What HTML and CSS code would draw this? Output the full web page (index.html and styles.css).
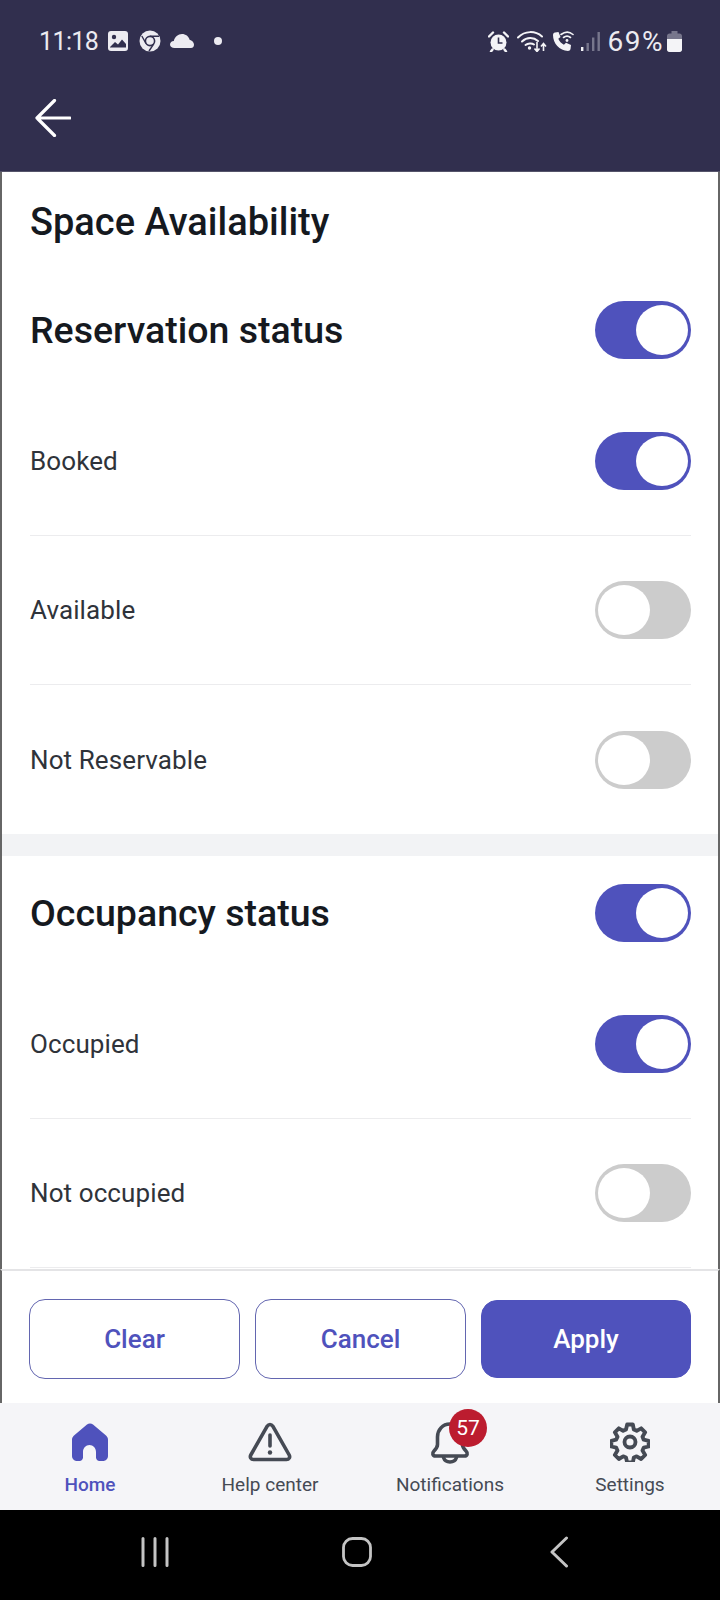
FILE: index.html
```html
<!DOCTYPE html>
<html lang="en">
<head>
    <meta charset="UTF-8">
    <meta name="viewport" content="width=device-width, initial-scale=1.0">
    <title>Space Availability</title>
    <link rel="stylesheet" href="styles.css">
</head>
<body>
    <div class="header">
        <div class="status-bar">
            <span class="clock">11:18</span>
            <svg class="st-icon" width="20" height="20" viewBox="0 0 20 20">
                <rect width="20" height="20" rx="3" fill="#ecebf1"/>
                <circle cx="6" cy="6" r="2.2" fill="#312f4e"/>
                <path d="M2 16l5-5 3 2.500 4-5 4 4.500v3.500H2z" fill="#312f4e"/>
            </svg>
            <svg class="st-icon chrome" width="22" height="22" viewBox="0 0 22 22">
                <circle cx="11" cy="11" r="10.500" fill="#ecebf1"/>
                <circle cx="11" cy="11" r="4.600" fill="none" stroke="#312f4e" stroke-width="1.600"/>
                <path d="M11 6.200h9M7 13.500L2.800 6M14.800 13.800L10 21" stroke="#312f4e" stroke-width="1.400" fill="none"/>
            </svg>
            <svg class="st-icon cloud" width="24" height="14" viewBox="0 0 24 14">
                <path d="M4.500 14C2 14 0 12.400 0 10.400 0 8.500 1.700 7 3.800 6.900 4.700 3 8 0 12 0c3.700 0 6.800 2.400 7.600 5.800C22 6.300 24 8.300 24 10.600 24 12.600 23 14 21 14z" fill="#ecebf1"/>
            </svg>
            <span class="st-dot"></span>
            <span class="st-spacer"></span>
            <svg class="st-icon" width="21" height="21" viewBox="0 0 21 21">
                <circle cx="10.500" cy="11.500" r="8" fill="#f4f4f7"/>
                <path d="M1 5.500L5 1.500M20 5.500L16 1.500M4.500 18.500L3 20.500M16.500 18.500L18 20.500" stroke="#f4f4f7" stroke-width="2.400" stroke-linecap="round"/>
                <path d="M10.500 6.500v5.500h4" stroke="#312f4e" stroke-width="1.600" fill="none"/>
            </svg>
            <svg class="st-icon wifi" width="30" height="22" viewBox="0 0 30 22">
                <g fill="none" stroke="#f4f4f7" stroke-width="2" stroke-linecap="round">
                    <path d="M1 7.500C8 .500 18 .500 25 6.500"/>
                    <path d="M5 11.500C10 7 16.500 7 21 11"/>
                    <path d="M8.500 15C11 13 15 13 17 14.500"/>
                </g>
                <circle cx="12.500" cy="18" r="1.700" fill="#f4f4f7"/>
                <path d="M20 12v9M17.500 18.500l2.500 3 2.500-3M26.500 21v-7M24 16.500l2.500-3 2.500 3" fill="none" stroke="#f4f4f7" stroke-width="1.600"/>
            </svg>
            <svg class="st-icon wifi-call" width="22" height="21" viewBox="0 0 22 21">
                <path d="M3 1.500L6.500 1l2 5-2.200 1.800c1 2.400 3 4.600 5.600 6L14 11.800l5 2.200-.5 4c-.2 1.200-1.300 2-2.500 2C7.500 19.500 1 12.500 1 4c0-1.200.8-2.300 2-2.500z" fill="#f4f4f7"/>
                <g fill="none" stroke="#f4f4f7" stroke-width="1.600" stroke-linecap="round">
                    <path d="M9 3.500C13 .500 17.500 .500 21 3.500"/>
                    <path d="M11.500 6.500c2.300-1.700 4.800-1.700 7 0"/>
                </g>
                <circle cx="15" cy="9.500" r="1.400" fill="#f4f4f7"/>
            </svg>
            <svg class="st-icon signal" width="19" height="21" viewBox="0 0 19 21">
                <rect x="0" y="16" width="2.400" height="4" fill="#f4f4f7"/>
                <rect x="5.500" y="12" width="2.400" height="8" fill="#77768c"/>
                <rect x="11" y="6.500" width="2.400" height="13.500" fill="#77768c"/>
                <rect x="16.500" y="1" width="2.400" height="19" fill="#77768c"/>
            </svg>
            <span class="battery-text">69%</span>
            <svg class="st-icon battery" width="15" height="21" viewBox="0 0 15 21">
                <path d="M4.500 0h6v2.500h2c1.400 0 2.500 1 2.500 2.500v13.500c0 1.400-1.100 2.500-2.500 2.500h-10C1.100 21 0 19.900 0 18.500V5c0-1.500 1.100-2.500 2.500-2.500h2z" fill="#77768c"/>
                <path d="M0 8h15v10.500c0 1.400-1.100 2.500-2.500 2.500h-10C1.100 21 0 19.900 0 18.500z" fill="#f4f4f7"/>
            </svg>
        </div>
        <div class="app-bar">
            <svg width="36" height="38" viewBox="0 0 36 38">
                <path d="M35 19H2M19.500 1.500L2 19l17.500 17.500" fill="none" stroke="#fff" stroke-width="3.200" stroke-linecap="round" stroke-linejoin="round"/>
            </svg>
        </div>
    </div>

    <div class="content">
        <h1 class="page-title">Space Availability</h1>

        <div class="section-head">
            <h2>Reservation status</h2>
            <span class="toggle on"><span class="knob"></span></span>
        </div>
        <div class="row">
            <span>Booked</span>
            <span class="toggle on"><span class="knob"></span></span>
        </div>
        <div class="row">
            <span>Available</span>
            <span class="toggle"><span class="knob"></span></span>
        </div>
        <div class="row last">
            <span>Not Reservable</span>
            <span class="toggle"><span class="knob"></span></span>
        </div>

        <div class="band"></div>

        <div class="section-head">
            <h2>Occupancy status</h2>
            <span class="toggle on"><span class="knob"></span></span>
        </div>
        <div class="row">
            <span>Occupied</span>
            <span class="toggle on"><span class="knob"></span></span>
        </div>
        <div class="row">
            <span>Not occupied</span>
            <span class="toggle"><span class="knob"></span></span>
        </div>
    </div>

    <div class="actions">
        <button class="btn outline">Clear</button>
        <button class="btn outline">Cancel</button>
        <button class="btn solid">Apply</button>
    </div>

    <div class="tabs">
        <div class="tab active">
            <div class="tab-icon">
                <svg width="40" height="40" viewBox="0 0 40 40">
                    <path d="M17 2.500c1.800-1.500 4.200-1.500 6 0l13 11c1.300 1.100 2 2.600 2 4.200V34c0 2.800-2.200 5-5 5h-3.500c-1.900 0-3.500-1.600-3.500-3.500V30c0-3.900-2.900-7-6.500-7S13 26.100 13 30v5.500c0 1.900-1.600 3.500-3.500 3.500H7c-2.800 0-5-2.200-5-5V17.700c0-1.600.7-3.100 2-4.200z" fill="#4f52bc"/>
                </svg>
            </div>
            <span>Home</span>
        </div>
        <div class="tab">
            <div class="tab-icon">
                <svg width="44" height="40" viewBox="0 0 44 40">
                    <path d="M22 2.500c-1.200 0-2.100.6-2.800 1.700L2.800 33c-1.200 2.200.2 4.500 2.700 4.500h33c2.500 0 3.900-2.300 2.700-4.500L24.800 4.200C24.100 3.100 23.200 2.500 22 2.500z" fill="none" stroke="#454a54" stroke-width="3.600" stroke-linejoin="round"/>
                    <path d="M22 13v11" stroke="#454a54" stroke-width="3.600" stroke-linecap="round"/>
                    <circle cx="22" cy="30.500" r="2.200" fill="#454a54"/>
                </svg>
            </div>
            <span>Help center</span>
        </div>
        <div class="tab">
            <div class="tab-icon">
                <svg width="40" height="42" viewBox="0 0 40 42">
                    <path d="M20 2C12.500 2 7.500 8 7.500 15v7.500c0 2.500-1.500 4.500-3.500 6.500-2 2-1.500 5 1.500 5h29c3 0 3.500-3 1.500-5-2-2-3.500-4-3.500-6.500V15C32.500 8 27.500 2 20 2z" fill="none" stroke="#454a54" stroke-width="3.600" stroke-linejoin="round"/>
                    <path d="M13.500 35.500c1 3 3.500 4.500 6.500 4.500s5.500-1.500 6.500-4.500" fill="none" stroke="#454a54" stroke-width="3.600" stroke-linecap="round"/>
                </svg>
                <span class="badge">57</span>
            </div>
            <span>Notifications</span>
        </div>
        <div class="tab">
            <div class="tab-icon">
                <svg width="40" height="40" viewBox="0 0 24 24">
                    <path d="M10.300 1.500h3.400l.6 3 1.700.8 2.700-1.500 2.400 2.400-1.600 2.700.7 1.700 3 .7v3.400l-3 .7-.7 1.700 1.600 2.700-2.400 2.400-2.700-1.600-1.700.7-.6 3h-3.400l-.7-3-1.700-.7-2.600 1.600-2.400-2.400 1.600-2.700-.8-1.700-2.900-.7v-3.400l2.900-.7.8-1.700-1.600-2.700 2.400-2.400 2.600 1.500 1.700-.8z" fill="none" stroke="#454a54" stroke-width="2.300" stroke-linejoin="round"/>
                    <circle cx="12" cy="12" r="3.300" fill="none" stroke="#454a54" stroke-width="2.300"/>
                </svg>
            </div>
            <span>Settings</span>
        </div>
    </div>

    <div class="nav-bar">
        <svg class="nav-recents" width="30" height="30" viewBox="0 0 30 30">
            <path d="M3 1.500v27M15 1.500v27M27 1.500v27" stroke="#c4c4c4" stroke-width="3" stroke-linecap="round"/>
        </svg>
        <svg class="nav-home" width="30" height="30" viewBox="0 0 30 30">
            <rect x="1.500" y="1.500" width="27" height="27" rx="9" fill="none" stroke="#c4c4c4" stroke-width="2.800"/>
        </svg>
        <svg class="nav-back" width="20" height="32" viewBox="0 0 20 32">
            <path d="M17.500 2L3 16l14.500 14" fill="none" stroke="#c4c4c4" stroke-width="3" stroke-linecap="round" stroke-linejoin="round"/>
        </svg>
    </div>
</body>
</html>
```

FILE: styles.css
```css
* {
    box-sizing: border-box;
}

html, body {
    margin: 0;
    padding: 0;
}

body {
    width: 720px;
    height: 1600px;
    display: flex;
    flex-direction: column;
    overflow: hidden;
    background-color: #fff;
    font-family: 'Roboto', sans-serif;
    color: #2f333a;
}

/* Top bars */
.header {
    height: 172px;
    flex: none;
    background-color: #312f4e;
    border-bottom: 1px solid #55546a;
}

.status-bar {
    height: 82px;
    display: flex;
    align-items: center;
    padding: 0 38px 0 39px;
    color: #ecebf1;
}

.clock {
    font-size: 25px;
    letter-spacing: -0.6px;
    width: 69px;
}

.st-icon {
    flex: none;
}

.chrome {
    margin-left: 11px;
}

.cloud {
    margin-left: 9px;
}

.st-dot {
    width: 8px;
    height: 8px;
    margin-left: 20px;
    border-radius: 50%;
    background-color: #ecebf1;
}

.st-spacer {
    flex: 1;
}

.wifi {
    margin-left: 8px;
}

.wifi-call {
    margin-left: 5px;
}

.signal {
    margin-left: 7px;
}

.battery-text {
    font-size: 28px;
    letter-spacing: 1.5px;
    margin-left: 8px;
}

.battery {
    margin-left: 3px;
}

.app-bar {
    height: 72px;
    display: flex;
    align-items: center;
    padding-left: 35px;
}

/* Filter list */
.content {
    flex: 1;
    min-height: 0;
    overflow: hidden;
    border-left: 2px solid #666;
    border-right: 2px solid #666;
}

.page-title {
    margin: 0;
    height: 101px;
    padding: 25px 28px 0;
    font-size: 38px;
    line-height: 50px;
    font-weight: 500;
    color: #15191f;
}

.section-head {
    height: 114px;
    display: flex;
    align-items: center;
    justify-content: space-between;
    padding: 0 27px 0 28px;
}

.section-head h2 {
    margin: 0;
    font-size: 37.5px;
    font-weight: 500;
    color: #15191f;
}

.row {
    height: 149px;
    margin: 0 27px 0 28px;
    display: flex;
    align-items: center;
    justify-content: space-between;
    border-bottom: 1px solid #ececee;
    font-size: 26px;
    letter-spacing: 0.1px;
}

.row.last {
    border-bottom: none;
}

.band {
    height: 22px;
    background-color: #f2f3f5;
}

.toggle {
    width: 96px;
    height: 58px;
    padding: 4px 3px;
    display: flex;
    border-radius: 29px;
    background-color: #cccccc;
}

.toggle.on {
    justify-content: flex-end;
    background-color: #4f52bc;
}

.knob {
    width: 52px;
    height: 50px;
    border-radius: 50%;
    background-color: #fff;
}

/* Buttons */
.actions {
    height: 134px;
    flex: none;
    display: flex;
    gap: 15px;
    padding: 28px 27px 24px 27px;
    background-color: #fff;
    border-top: 2px solid #e4e4e6;
    border-left: 2px solid #666;
    border-right: 2px solid #666;
}

.btn {
    flex: 1;
    height: 80px;
    padding: 0;
    border: 1.5px solid #6366b0;
    border-radius: 16px;
    font-family: 'Roboto', sans-serif;
    font-size: 26px;
    font-weight: 500;
}

.btn.outline {
    background-color: #fff;
    color: #4f52bc;
}

.btn.solid {
    flex: none;
    width: 210px;
    height: 78px;
    margin-top: 1px;
    border-color: #4f52bc;
    background-color: #4f52bc;
    color: #fff;
}

/* Tab bar */
.tabs {
    height: 107px;
    flex: none;
    display: flex;
    background-color: #f5f5f8;
}

.tab {
    flex: 1;
    display: flex;
    flex-direction: column;
    align-items: center;
    padding-top: 19px;
    font-size: 19px;
    color: #454a54;
}

.tab.active {
    color: #4f52bc;
    font-weight: 500;
}

.tab-icon {
    position: relative;
    height: 42px;
    margin-bottom: 9px;
}

.badge {
    position: absolute;
    top: -13px;
    left: 19px;
    width: 38px;
    height: 38px;
    border-radius: 50%;
    background-color: #bc1c2f;
    color: #fff;
    font-size: 21px;
    line-height: 38px;
    text-align: center;
}

/* System nav */
.nav-bar {
    height: 90px;
    flex: none;
    display: flex;
    align-items: center;
    padding: 0 0 6px 140px;
    background-color: #000;
}

.nav-home {
    margin-left: 172px;
}

.nav-back {
    margin-left: 177px;
}
```
